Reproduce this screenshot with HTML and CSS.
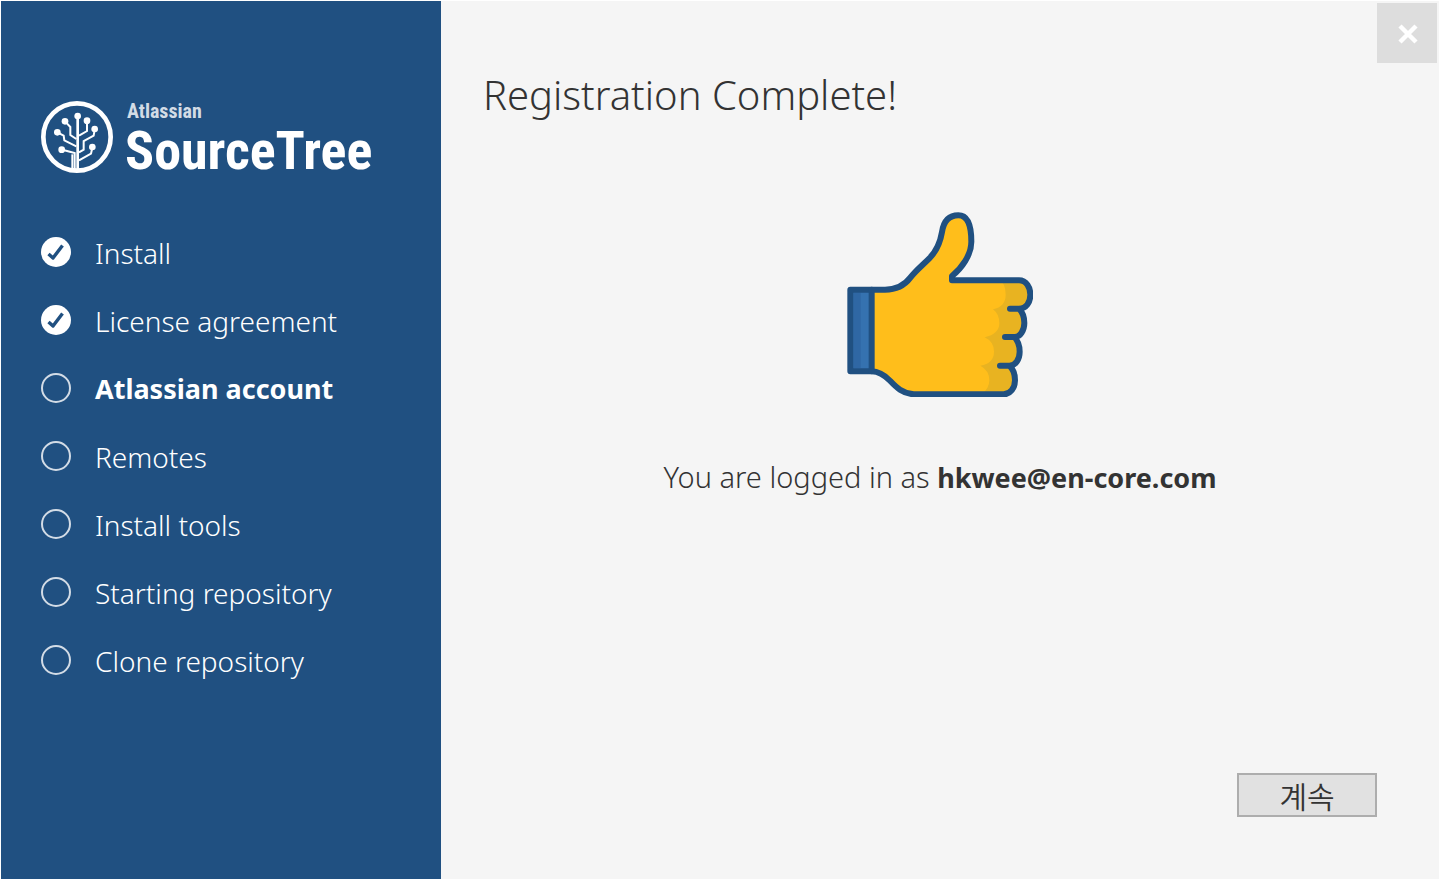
FILE: index.html
```html
<!DOCTYPE html>
<html lang="ko">
<head>
<meta charset="utf-8">
<meta name="viewport" content="width=device-width, initial-scale=1">
<title>SourceTree</title>
<link rel="stylesheet" href="styles.css">
</head>
<body>
<svg class="defs" aria-hidden="true">
  <symbol id="done" viewBox="0 0 30 30">
    <circle cx="15" cy="15" r="15" fill="#fff"/>
    <path d="M7.500 17 L12 21 L21.500 8.500" fill="none" stroke="#205081" stroke-width="3.400" stroke-linejoin="round"/>
  </symbol>
  <symbol id="todo" viewBox="0 0 30 30">
    <circle cx="15" cy="15" r="14" fill="none" stroke="#d3dce6" stroke-width="2"/>
  </symbol>
</svg>
<div class="window">
  <aside class="sidebar">
    <div class="brand">
      <svg class="brand-mark" viewBox="0 0 216 216" aria-hidden="true">
        <g fill="none" stroke="#fff">
          <circle cx="108" cy="108" r="101" stroke-width="14"/>
          <g stroke-width="6">
            <path d="M110 46V206" stroke-width="8"/>
            <path d="M101 206V156L64 146"/>
            <path d="M94 206V160"/>
            <path d="M106 136L70 118L68 104L49 94"/>
            <path d="M106 114L88 102V78L72 61"/>
            <path d="M114 104L138 90V60"/>
            <path d="M114 154L128 146V120L158 104L161 86"/>
            <path d="M114 178L150 158L154 140"/>
          </g>
        </g>
        <g fill="#fff">
          <circle cx="110" cy="45" r="10"/><circle cx="72" cy="61" r="10"/><circle cx="138" cy="59" r="10"/>
          <circle cx="49" cy="94" r="10"/><circle cx="161" cy="84" r="10"/><circle cx="62" cy="146" r="10"/><circle cx="154" cy="138" r="10"/>
        </g>
      </svg>
      <div class="brand-text">
        <span class="brand-company">Atlassian</span>
        <span class="brand-product">SourceTree</span>
      </div>
    </div>
    <ol class="steps">
      <li class="step"><svg class="step-icon" aria-hidden="true"><use href="#done"/></svg><span>Install</span></li>
      <li class="step"><svg class="step-icon" aria-hidden="true"><use href="#done"/></svg><span>License agreement</span></li>
      <li class="step step-current" aria-current="step"><svg class="step-icon" aria-hidden="true"><use href="#todo"/></svg><span>Atlassian account</span></li>
      <li class="step"><svg class="step-icon" aria-hidden="true"><use href="#todo"/></svg><span>Remotes</span></li>
      <li class="step"><svg class="step-icon" aria-hidden="true"><use href="#todo"/></svg><span>Install tools</span></li>
      <li class="step"><svg class="step-icon" aria-hidden="true"><use href="#todo"/></svg><span>Starting repository</span></li>
      <li class="step"><svg class="step-icon" aria-hidden="true"><use href="#todo"/></svg><span>Clone repository</span></li>
    </ol>
  </aside>
  <main class="content">
    <div class="titlebar">
      <button class="close" type="button" aria-label="Close">
        <svg class="close-icon" viewBox="0 0 20 20" aria-hidden="true"><path d="M2 2L18 18M18 2L2 18" stroke="#fff" stroke-width="4.500"/></svg>
      </button>
    </div>
    <h1 class="heading">Registration Complete!</h1>
    <section class="result">
      <svg class="thumb" viewBox="36 36 558 555" role="img" aria-label="Thumbs up">
        <clipPath id="hand"><path d="M110 269H150C186 269 208 257 226 233C240 214 262 196 283 175C304 154 316 126 321 96C326 64 341 46 370 46C399 46 409 76 409 125C409 166 379 205 351 228V241H552C574 241 586 262 586 284C586 306 574 326 552 326C564 338 568 350 568 369C568 391 556 411 538 411C550 423 554 436 554 455C554 477 542 497 523 497C536 508 540 522 540 541C540 564 526 583 506 583H236C202 580 184 562 166 543C148 525 130 514 110 514Z"/></clipPath>
        <g clip-path="url(#hand)">
          <path d="M100 36H600V600H100Z" fill="#ffbe1b"/>
          <path d="M494 241Q512 250 512 284Q512 320 474 328Q493 342 493 370Q493 402 449 412Q477 425 477 455Q477 490 436 497Q463 511 463 541Q463 565 440 583H600V241Z" fill="#e8b321"/>
        </g>
        <path d="M46 269H110V514H46Z" fill="#3572b0"/>
        <path d="M56 278H77V504H56Z" fill="#2f67a4"/>
        <g fill="none" stroke="#205081" stroke-width="18" stroke-linejoin="round" stroke-linecap="round">
          <path d="M46 269H110V514H46Z"/>
          <path d="M110 269H150C186 269 208 257 226 233C240 214 262 196 283 175C304 154 316 126 321 96C326 64 341 46 370 46C399 46 409 76 409 125C409 166 379 205 351 228V241H552C574 241 586 262 586 284C586 306 574 326 552 326H525H552C564 338 568 350 568 369C568 391 556 411 538 411H510H538C550 423 554 436 554 455C554 477 542 497 523 497H495H523C536 508 540 522 540 541C540 564 526 583 506 583H236C202 580 184 562 166 543C148 525 130 514 110 514"/>
        </g>
      </svg>
      <p class="message">You are logged in as <strong>hkwee@en-core.com</strong></p>
    </section>
    <footer class="actions">
      <button class="next" type="button">계속</button>
    </footer>
  </main>
</div>
</body>
</html>
```
FILE: styles.css
```css
* { box-sizing: border-box; }
body {
  margin: 0;
  background: #f5f5f5;
  color: #333;
  font-family: "Noto Sans", "Noto Sans CJK KR", sans-serif;
  font-size: 28px;
  font-weight: 300;
  line-height: 40px;
}
.defs { display: none; }
.window {
  display: flex;
  min-height: 100vh;
  border: 1px solid #fff;
}
.sidebar {
  flex: none;
  width: 440px;
  padding: 100px 40px 40px;
  background: #205081;
  color: #fff;
}
.brand {
  display: flex;
  gap: 12px;
  height: 72px;
}
.brand-mark { flex: none; width: 72px; height: 72px; }
.brand-text {
  display: flex;
  flex-direction: column;
  font-family: "Roboto Condensed", "Liberation Sans Narrow", sans-serif;
  font-weight: 700;
}
.brand-company {
  padding-left: 2px;
  color: #d3dce6;
  font-size: 20px;
  line-height: 20px;
}
.brand-product {
  font-size: 54px;
  line-height: 60px;
}
.steps {
  display: flex;
  flex-direction: column;
  gap: 28px;
  margin: 60px 0 0;
  padding: 0;
  list-style: none;
}
.step {
  display: flex;
  gap: 24px;
}
.step-icon { flex: none; width: 30px; height: 30px; margin-top: 4px; }
.step-current { font-size: 27px; font-weight: 700; }
.content {
  flex: 1;
  display: flex;
  flex-direction: column;
  min-width: 0;
}
.titlebar {
  display: flex;
  justify-content: flex-end;
  padding: 2px 2px 0;
}
.close {
  display: grid;
  place-items: center;
  width: 60px;
  height: 60px;
  padding: 2px 0 0 2px;
  border: 0;
  background: #ddd;
}
.close-icon { width: 20px; height: 20px; }
.heading {
  margin: 4px 42px 0;
  font-size: 40px;
  font-weight: 300;
  line-height: 56px;
}
.result {
  flex: 1;
  display: flex;
  flex-direction: column;
  align-items: center;
  gap: 60px;
  padding-top: 89px;
}
.thumb { width: 186px; height: 185px; }
.message { margin: 0; font-size: 29px; }
.message strong { font-size: 27px; font-weight: 700; }
.actions {
  display: flex;
  justify-content: flex-end;
  padding: 0 62px 62px;
}
.next {
  width: 140px;
  height: 44px;
  padding: 0;
  border: 2px solid #adadad;
  background: #e1e1e1;
  color: #333;
  font: 350 30px/36px "Noto Sans CJK KR", sans-serif;
}
```
